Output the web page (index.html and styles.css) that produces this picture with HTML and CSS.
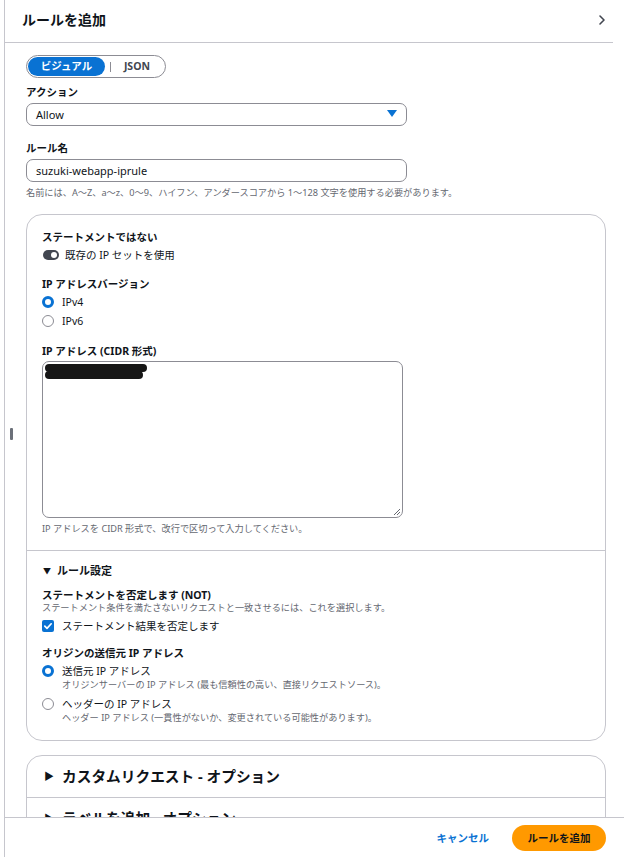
FILE: index.html
```html
<!DOCTYPE html>
<html lang="ja">
<head>
<meta charset="utf-8">
<title>ルールを追加</title>
<link rel="stylesheet" href="styles.css">
</head>
<body>
<div class="panel">
  <span class="drag-handle"></span>
  <header class="panel-header">
    <h2 class="panel-title">ルールを追加</h2>
    <svg class="chevron" width="8" height="12" viewBox="0 0 8 12"><path d="M2 2l4 4-4 4" fill="none" stroke="#424650" stroke-width="1.6" stroke-linecap="round" stroke-linejoin="round"/></svg>
  </header>

  <div class="content">
    <div class="segmented">
      <span class="seg seg-active">ビジュアル</span>
      <span class="seg-sep"></span>
      <span class="seg">JSON</span>
    </div>

    <div class="label mt7">アクション</div>
    <div class="select">
      <span>Allow</span>
      <svg width="10" height="7" viewBox="0 0 10 7"><path d="M0 0h10L5 7z" fill="#0972d3"/></svg>
    </div>

    <div class="label mt15">ルール名</div>
    <div class="input">suzuki-webapp-iprule</div>
    <div class="hint">名前には、A〜Z、a〜z、0〜9、ハイフン、アンダースコアから 1〜128 文字を使用する必要があります。</div>

    <section class="card">
      <div class="card-section first">
        <div class="label">ステートメントではない</div>
        <div class="row mt4">
          <span class="toggle"><span class="knob"></span></span>
          <span class="text">既存の IP セットを使用</span>
        </div>

        <div class="label mt15">IP アドレスバージョン</div>
        <div class="row mt4"><span class="radio checked"></span><span class="text">IPv4</span></div>
        <div class="row mt5"><span class="radio"></span><span class="text">IPv6</span></div>

        <div class="label mt16">IP アドレス (CIDR 形式)</div>
        <div class="textarea">
          <span class="redact r1"></span>
          <span class="redact r2"></span>
          <svg class="grip" width="8" height="8" viewBox="0 0 8 8"><path d="M7 1L1 7M7 4L4 7" stroke="#656871" stroke-width="1" fill="none"/></svg>
        </div>
        <div class="hint">IP アドレスを CIDR 形式で、改行で区切って入力してください。</div>
      </div>

      <div class="card-section second">
        <div class="expander"><span class="caret-down">▼</span>ルール設定</div>

        <div class="label mt10">ステートメントを否定します (NOT)</div>
        <div class="desc">ステートメント条件を満たさないリクエストと一致させるには、これを選択します。</div>
        <div class="row mt5">
          <span class="checkbox"><svg width="12" height="12" viewBox="0 0 12 12"><path d="M2.8 6.2l2.2 2.2 4.2-4.6" fill="none" stroke="#fff" stroke-width="1.7" stroke-linecap="round" stroke-linejoin="round"/></svg></span>
          <span class="text">ステートメント結果を否定します</span>
        </div>

        <div class="label mt13">オリジンの送信元 IP アドレス</div>
        <div class="row mt4"><span class="radio checked"></span><span class="text">送信元 IP アドレス</span></div>
        <div class="desc indent">オリジンサーバーの IP アドレス (最も信頼性の高い、直接リクエストソース)。</div>
        <div class="row mt6"><span class="radio"></span><span class="text">ヘッダーの IP アドレス</span></div>
        <div class="desc indent">ヘッダー IP アドレス (一貫性がないか、変更されている可能性があります)。</div>
      </div>
    </section>

    <section class="card card-options">
      <div class="option"><span class="caret-right">▶</span>カスタムリクエスト - オプション</div>
      <div class="option"><span class="caret-right">▶</span>ラベルを追加 - オプション</div>
    </section>
  </div>
</div>

<footer class="footer">
  <span class="link-btn">キャンセル</span>
  <span class="primary-btn">ルールを追加</span>
</footer>
</body>
</html>
```

FILE: styles.css
```css
* { box-sizing: border-box; }

html, body {
  margin: 0;
  padding: 0;
  background: #fff;
}

body {
  font-family: "Noto Sans", "Noto Sans CJK JP", sans-serif;
  color: #0f141a;
  font-size: 10.5px;
  overflow: hidden;
}

.panel {
  position: relative;
  margin-left: 4px;
  width: 609px;
  min-height: 857px;
  border-left: 1px solid #c6c6cd;
}

.drag-handle {
  position: absolute;
  left: 5px;
  top: 428px;
  width: 3px;
  height: 12px;
  background: #6b7079;
  border-radius: 1px;
}

.panel-header {
  height: 43px;
  display: flex;
  align-items: center;
  justify-content: space-between;
  padding: 0 7px 0 17px;
  border-bottom: 1px solid #c6c6cd;
}

.panel-title {
  margin: 0;
  font-size: 14px;
  line-height: 20px;
  font-weight: 700;
  margin-top: -3px;
}

.chevron { margin-top: -2px; }

.content {
  padding: 12px 7px 0 21px;
}

.segmented {
  width: 140px;
  height: 23px;
  border: 1px solid #8c8c94;
  border-radius: 12px;
  display: flex;
  align-items: center;
  padding: 1px;
}

.seg {
  font-weight: 700;
  font-size: 10.5px;
  line-height: 19px;
  height: 19px;
  color: #424650;
  padding: 0 14px 0 13px;
}

.seg-active {
  width: 77px;
  background: #0972d3;
  color: #fff;
  border-radius: 10px;
  text-align: center;
  padding: 0;
}

.seg-sep {
  width: 1px;
  height: 10px;
  background: #8c8c94;
  margin: 0 0 0 5px;
}

.label {
  font-weight: 700;
  font-size: 10.5px;
  line-height: 14px;
}

.mt4 { margin-top: 4px; }
.mt5 { margin-top: 5px; }
.mt6 { margin-top: 6px; }
.mt7 { margin-top: 7px; }
.mt10 { margin-top: 10px; }
.mt13 { margin-top: 13px; }
.mt15 { margin-top: 15px; }
.mt16 { margin-top: 16px; }

.select,
.input {
  margin-top: 4px;
  width: 381px;
  height: 23px;
  border: 1px solid #8c8c94;
  border-radius: 7px;
  display: flex;
  align-items: center;
  justify-content: space-between;
  padding: 0 9px 0 9px;
  font-size: 11px;
}

.select svg { margin-top: -2px; }

.hint {
  margin-top: 5px;
  font-size: 9.2px;
  line-height: 12px;
  color: #656871;
}

.card {
  margin-top: 15px;
  width: 580px;
  border: 1px solid #c6c6cd;
  border-radius: 16px;
}

.card-section.first {
  padding: 15px 16px 15px 15px;
  border-bottom: 1px solid #c6c6cd;
}

.card-section.second {
  padding: 13px 16px 16px 15px;
}

.row {
  display: flex;
  align-items: center;
  height: 14px;
  gap: 8px;
}

.text {
  font-size: 10.5px;
  line-height: 14px;
}

.toggle {
  position: relative;
  width: 16px;
  height: 10px;
  border-radius: 5px;
  background: #424650;
  flex: none;
  margin-right: -2px;
  margin-left: 1px;
}

.knob {
  position: absolute;
  right: 2px;
  top: 2px;
  width: 6px;
  height: 6px;
  border-radius: 50%;
  background: #fff;
}

.radio {
  width: 12px;
  height: 12px;
  border-radius: 50%;
  border: 1px solid #8c8c94;
  flex: none;
}

.radio.checked {
  border: 3.5px solid #0972d3;
}

.checkbox {
  width: 12px;
  height: 12px;
  border-radius: 2px;
  background: #0972d3;
  flex: none;
  display: flex;
}

.textarea {
  position: relative;
  margin-top: 3px;
  width: 361px;
  height: 157px;
  border: 1px solid #8c8c94;
  border-radius: 7px;
  padding: 2px 0 0 2px;
}

.redact {
  display: block;
  background: #161616;
  border-radius: 5px;
}

.r1 { width: 102px; height: 8px; }
.r2 { width: 98px; height: 8px; margin-top: -1px; border-radius: 4px; }

.grip {
  position: absolute;
  right: 1px;
  bottom: 1px;
}

.expander {
  font-weight: 700;
  font-size: 11px;
  line-height: 14px;
  display: flex;
  align-items: center;
}

.caret-down {
  font-size: 8px;
  margin-right: 6px;
  margin-left: 1px;
}

.desc {
  font-size: 9.2px;
  line-height: 12px;
  color: #656871;
}

.desc.indent {
  padding-left: 20px;
  margin-top: 1px;
}

.card-options {
  margin-top: 14px;
}

.option {
  font-weight: 700;
  font-size: 14.7px;
  line-height: 20px;
  padding: 10px 16px 11px 17px;
  display: flex;
  align-items: center;
}

.option + .option {
  border-top: 1px solid #c6c6cd;
}

.caret-right {
  font-size: 10px;
  margin-right: 8px;
}

.footer {
  position: fixed;
  left: 5px;
  right: 0;
  bottom: 0;
  height: 40px;
  background: #fff;
  border-top: 1px solid #c6c6cd;
  display: flex;
  align-items: center;
  justify-content: flex-end;
  padding-right: 18px;
  gap: 23px;
}

.link-btn {
  font-weight: 700;
  font-size: 10.5px;
  color: #0972d3;
}

.primary-btn {
  width: 94px;
  height: 26px;
  border-radius: 13px;
  background: #ff9900;
  color: #0f141a;
  font-weight: 700;
  font-size: 10.5px;
  display: flex;
  align-items: center;
  justify-content: center;
}
```
